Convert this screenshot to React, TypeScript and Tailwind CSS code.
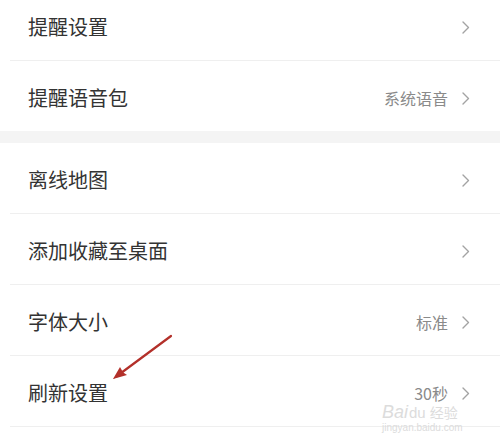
import React from "react";

const font = { fontFamily: '"Noto Sans CJK SC", "Noto Sans", sans-serif' };

function Chevron() {
  return (
    <svg width="8" height="13" viewBox="0 0 8 13" className="shrink-0">
      <path d="M1 1 L6.5 6.5 L1 12" fill="none" stroke="#a3a3a3" strokeWidth="1.4" strokeLinecap="round" strokeLinejoin="round" />
    </svg>
  );
}

function Row({ label, value, divider = true }: { label: string; value?: string; divider?: boolean }) {
  return (
    <div className="flex flex-col">
      <div className="flex h-[70px] items-center justify-between pl-[28px] pr-[30px] pt-[4px]">
        <span className="text-[20px] leading-none text-[#333333]">{label}</span>
        <div className="flex items-center gap-[14px]">
          {value && <span className="text-[16px] leading-none text-[#8a8a8a]">{value}</span>}
          <Chevron />
        </div>
      </div>
      {divider && <div className="ml-[10px] h-px bg-[#efefef]" />}
    </div>
  );
}

export default function App() {
  return (
    <div className="relative h-[440px] w-[500px] overflow-hidden bg-white" style={font}>
      <div className="-mt-[10px] flex flex-col">
        <Row label="提醒设置" />
        <Row label="提醒语音包" value="系统语音" divider={false} />
        <div className="h-[12px] bg-[#f4f4f4]" />
        <Row label="离线地图" />
        <Row label="添加收藏至桌面" />
        <Row label="字体大小" value="标准" />
        <Row label="刷新设置" value="30秒" />
        <div className="h-[20px]" />
      </div>
      <svg className="absolute left-0 top-0" width="500" height="440" viewBox="0 0 500 440">
        <line x1="171" y1="336" x2="117" y2="376" stroke="#b3302a" strokeWidth="2.2" strokeLinecap="round" />
        <path d="M113 379 L120 367 L124 374 Z" fill="#b3302a" />
        <path d="M113 379 L127 375 L121 371 Z" fill="#b3302a" />
      </svg>
      <div className="absolute left-[382px] top-[403px] flex flex-col items-start text-[#dcdcdc]">
        <div className="flex items-baseline gap-[1px]">
          <span className="text-[18px] leading-none italic" style={{ fontFamily: '"Liberation Sans", sans-serif' }}>Bai</span>
          <span className="text-[15px] leading-none" style={{ fontFamily: '"Liberation Sans", sans-serif' }}>du</span>
          <span className="ml-[3px] text-[14px] leading-none">经验</span>
        </div>
        <span className="mt-[2px] text-[10px] leading-none" style={{ fontFamily: '"Liberation Sans", sans-serif' }}>jingyan.baidu.com</span>
      </div>
    </div>
  );
}
